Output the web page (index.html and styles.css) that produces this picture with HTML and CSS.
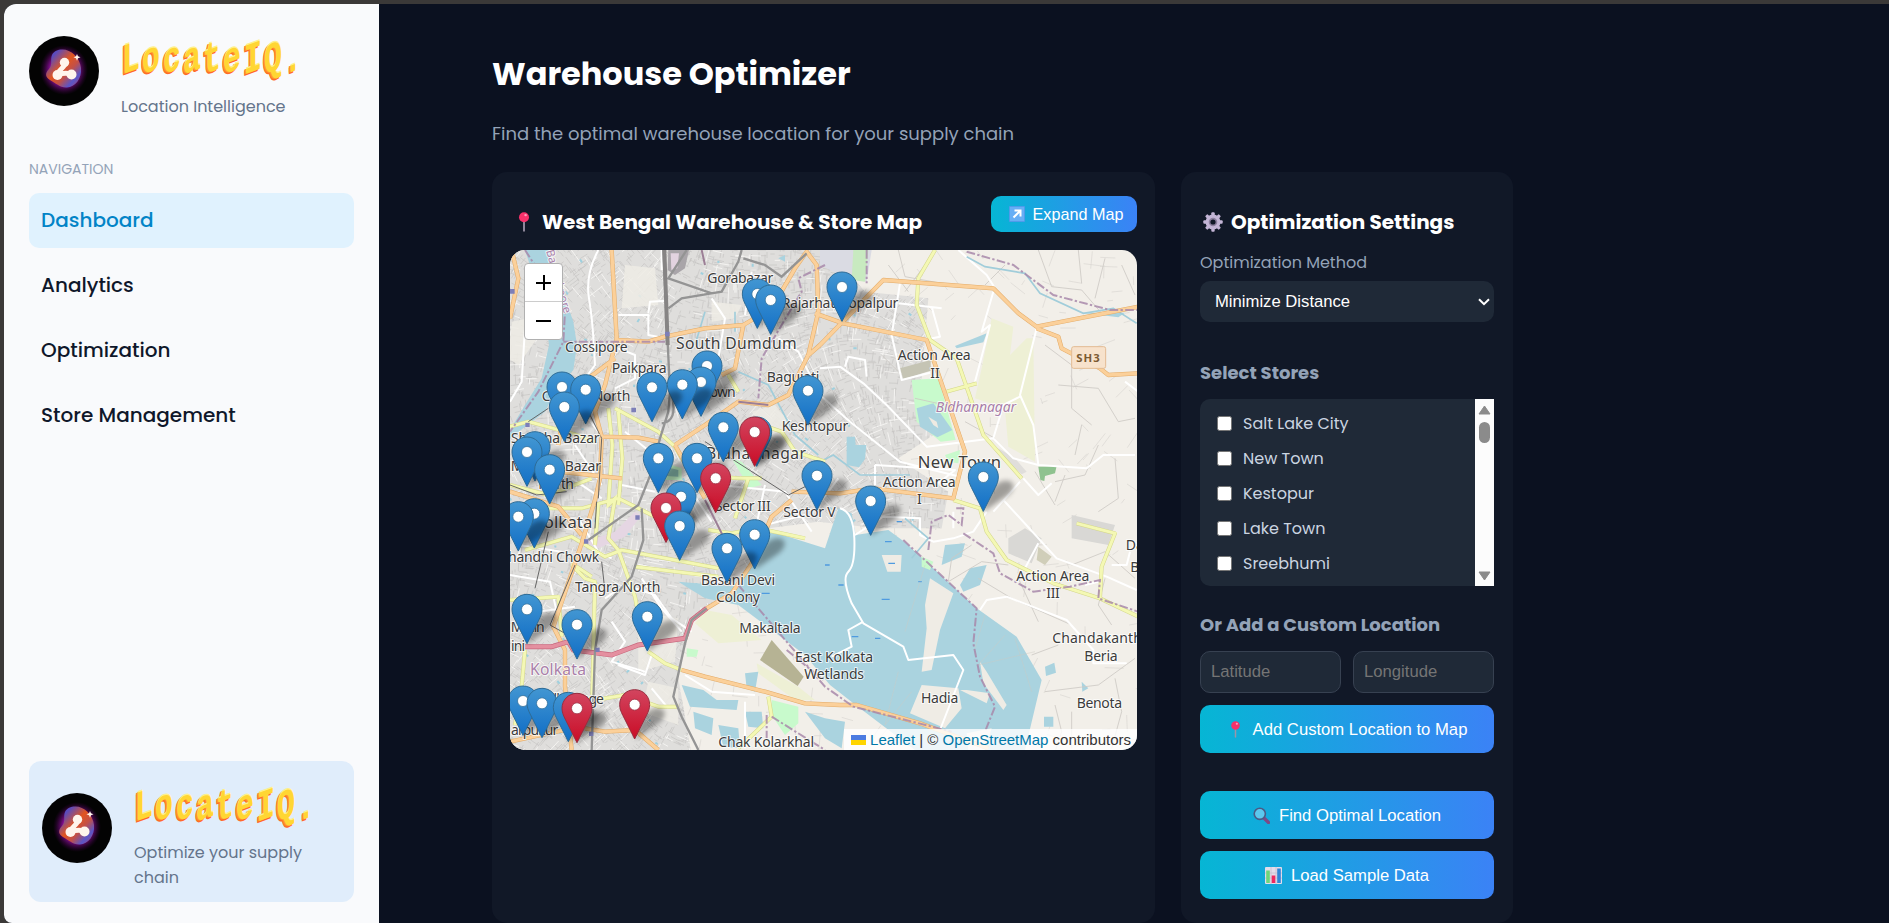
FILE: index.html
```html
<!DOCTYPE html>
<html lang="en">
<head>
<meta charset="utf-8">
<title>LocateIQ</title>
<link rel="stylesheet" href="styles.css">
</head>
<body>
<svg class="defs" aria-hidden="true">
  <defs>
    <linearGradient id="blob" x1="0" y1="0" x2="1" y2="1"><stop offset="0" stop-color="#4a4fd0"/><stop offset=".18" stop-color="#5a4bbd"/><stop offset=".45" stop-color="#e2551f"/><stop offset=".62" stop-color="#c25048"/><stop offset=".8" stop-color="#5a55c8"/><stop offset="1" stop-color="#b04a60"/></linearGradient>
    <radialGradient id="glow"><stop offset=".6" stop-color="#a010b0" stop-opacity=".8"/><stop offset="1" stop-color="#50005a" stop-opacity="0"/></radialGradient>
    <symbol id="logo" viewBox="0 0 70 70">
      <circle cx="35" cy="35" r="35" fill="#030303"/>
      <ellipse cx="35" cy="34" rx="24" ry="25" fill="url(#glow)"/>
      <path d="M33 13.500C41 13 51 21 52 32C53 43 46 51 38 51.500C31 52 27 47 21 44C16 41 16 37 20 33C24 28 21 24 23 19C25 15 29 13.500 33 13.500Z" fill="url(#blob)"/>
      <path d="M35.500 26.500C37 32 30 32 29 38M29 39Q36 36 43 38.500" fill="none" stroke="#fff5ec" stroke-width="5"/>
      <circle cx="35.500" cy="26.500" r="4.700" fill="#fff5ec"/><circle cx="28.500" cy="39" r="5" fill="#fff5ec"/><circle cx="42.500" cy="38.500" r="5" fill="#fff5ec"/>
      <path d="M48 18l1 2.300 2.500 1-2.500 1-1 2.400-1-2.400-2.500-1 2.500-1z" fill="#fff5ec"/>
    </symbol>
    <symbol id="pin" viewBox="0 0 20 20">
      <path d="M9.100 8h1.800v11.200l-.9.600-.9-.600z" fill="#9d94a8"/>
      <circle cx="10" cy="5.200" r="5" fill="#f8316a"/><ellipse cx="11.600" cy="3.200" rx="1.300" ry="1.100" fill="#ff9dbb"/>
    </symbol>
  </defs>
</svg>
<div class="window">
  <aside class="sidebar">
    <div class="brand">
      <svg class="logo"><use href="#logo"/></svg>
      <div>
        <div class="wordmark"><span>L</span><span>o</span><span>c</span><span>a</span><span>t</span><span>e</span><span>I</span><span>Q</span><span>.</span></div>
        <div class="tagline">Location Intelligence</div>
      </div>
    </div>
    <div class="nav-title">NAVIGATION</div>
    <nav class="nav">
      <a class="active">Dashboard</a>
      <a>Analytics</a>
      <a>Optimization</a>
      <a>Store Management</a>
    </nav>
    <div class="promo">
      <svg class="logo"><use href="#logo"/></svg>
      <div>
        <div class="wordmark"><span>L</span><span>o</span><span>c</span><span>a</span><span>t</span><span>e</span><span>I</span><span>Q</span><span>.</span></div>
        <div class="tagline">Optimize your supply<br>chain</div>
      </div>
    </div>
  </aside>
  <main class="main">
    <h1>Warehouse Optimizer</h1>
    <p class="lead">Find the optimal warehouse location for your supply chain</p>
    <div class="cards">
      <section class="card map-card">
        <div class="map-head">
          <h2><svg class="ico"><use href="#pin"/></svg>West Bengal Warehouse &amp; Store Map</h2>
          <button class="btn expand"><svg class="ico16" viewBox="0 0 16 16"><rect width="16" height="16" rx="1" fill="#4f9bea"/><rect x="1" y="1" width="14" height="14" fill="#67aef5"/><path d="M4.500 11.500L10.500 5.500M5.500 4.500h6v6" fill="none" stroke="#fff" stroke-width="2"/></svg>Expand Map</button>
        </div>
        <div class="map">
          <svg class="tiles" viewBox="15 15 1881 1500" id="map">
            <defs>
              <clipPath id="urban"><path d="M0 0H960L1080 140 1270 160 1250 400 1300 560 1180 640 1330 740 1310 850 1120 850 940 830 790 850 700 1020 560 1130 520 1300 560 1530H0z"/></clipPath>
              <linearGradient id="mb" x1="0" y1="0" x2="0" y2="1"><stop offset="0" stop-color="#4296d2"/><stop offset="1" stop-color="#126fc6"/></linearGradient>
              <linearGradient id="mr" x1="0" y1="0" x2="0" y2="1"><stop offset="0" stop-color="#d2455f"/><stop offset="1" stop-color="#ca0c26"/></linearGradient>
              <filter id="soft" x="-50%" y="-50%" width="200%" height="200%"><feGaussianBlur stdDeviation="2.200"/></filter>
              <g id="sh"><path d="M0 28C2 14 9 4 17 3 26 2 26 10 19 15Z" fill="#000" opacity=".34" filter="url(#soft)"/></g>
              <path id="mk" d="M0-12C-7-12-12-6.500-12 0-12 3-11 5.500-9.500 8.500L0 27.500 9.500 8.500C11 5.500 12 3 12 0 12-6.500 7-12 0-12Z"/>
              <g id="b"><use href="#sh"/><use href="#mk" fill="url(#mb)" stroke="#2e6c97" stroke-width=".8"/><circle r="4.400" fill="#fff" stroke="#2e6c97" stroke-width=".6"/></g>
              <g id="r"><use href="#sh"/><use href="#mk" fill="url(#mr)" stroke="#982e40" stroke-width=".8"/><circle r="4.400" fill="#fff" stroke="#982e40" stroke-width=".6"/></g>
            </defs>
            <rect width="1920" height="1530" fill="#f2efe9"/>
            <g id="rural" class="lane"></g>
            <g clip-path="url(#urban)"><rect width="1400" height="1530" fill="#dfdedc"/>
              <g id="streets"></g>
              <g fill="#efece5" opacity=".85"><path d="M360 60l90 10 10 110-110 10zM620 170l90 10-20 40-70 10zM20 230l50-10 40 40-70 100-30-20zM560 430l60 20-70 50zM740 500l70-20 50 60-60 30zM400 1100l120 20-10 130-110 30zM430 1310l90 20v110l-110-40z"/></g></g>
            <!-- land cover -->
            <g>
              <path class="water" d="M60 15H130L205 230 216 300 205 375 150 440 120 500 15 580V555L60 480 110 400 132 300 120 200Z"/>
              <path fill="#a9a5a9" d="M490 15h62l-12 55-30 20-22-15z"/><path fill="#e3d3e0" d="M497 25l25 0-5 45-18 5z"/>
              <path fill="#dadbe3" d="M945 15h155l-15 95-60-10-80-40z"/><path fill="#c8eac0" d="M1045 15h45l-10 95-40-5z"/>
              <g transform="translate(945)">
                <path class="field" d="M515 220l65 25-10 85 50-50 20 0 5 370-80-45-10-110-30-15-60-20 20-90z"/>
                <path class="park" d="M275 405l80-5 20 70 32 115-45 5-72-60z"/>
                <path class="water" d="M290 490l50-15 32 45 25 35-45 22-52-32zM80 575l25 0 2 25 32 0-4 42-18 25-37-7zM405 303l95-38-10 27-80 18zM785 203l130 0-20 14z"/>
                <path fill="#eeeae2" d="M325 515l25 15 5 20-15-10z"/>
                <path fill="#c5c4b4" d="M240 370l92-25v32l-82 25z"/>
                <path fill="#8fc28f" d="M655 665l55-2-5 22-30 8-2 15-12-3z"/>
                <path class="park" d="M375 630l45-15-5 40-30-5z"/><path fill="#e0dedb" d="M535 610l50 30 35 40-15 8-60-50z"/>
              </g>
              <path class="park" d="M680 640l30 10 60 70-40 10-20-40zM470 650l60 20v35l-55 0z"/><path fill="#8fc5b8" d="M480 665l40 10 0 20-38-2z"/>
              <path class="water" d="M820 40l20-10v20z"/>
              <path class="water" d="M790 855L850 875 960 910 1000 790 1040 805 1052 870 1150 855 1200 892 1415 1090 1535 1175 1610 1305 1560 1515H1230L1045 1375 975 1320 900 1230 700 1080 600 1060 520 1010 700 1025 740 960Z"/>
              <path fill="#efece5" d="M1275 1000l70 45-40 110-25 120-30 5 15-130-5-70zM1250 1320l110 10 10 60-50 60-105-45zM1130 930l60 0-3 50-40 0zM1385 1335l70 10-10 30-80-40zM1385 1465l75-15-20 65h-50zM1425 1250l20 30 60 100-10 15-60-80z"/>
              <path class="water" d="M1320 900l60-5-10 40-60 25zM1365 1020l30-50 50-10-20 60-50 20zM1620 1265l28-12 5 30-30 10zM1617 1415l28 0v30l-28 0zM1730 1310l20 20-18 10z"/>
              <path class="field" d="M600 1095l80 15 90 75-130 10-70-60zM755 1255l125 70 50 40-60 0-110-80z"/>
              <path fill="#b6b394" d="M800 1185l96 110-18 28-113-78z"/>
              <path class="park" d="M800 1365l80 20v50l-40 35-40-60zM545 1210l35 5-5 20-30 0zM1250 935l35 15-10 25-25-10z"/>
              <path class="water" d="M530 1320l65 15 40 30 65 0-5 30-140-10zM565 1400l60 20-5 50-50-20zM720 1285l40-5-10 60-25-10zM640 1440l60 10 5 60-50-5zM720 1400l50 0 5 50-45-5zM900 1400l60 20 60 10-10 80-50-30z"/>
              <path fill="#d9d8d5" d="M1700 810l130 30-20 60-110-20zM1510 880l50-30 50 30-30 75-70-30z"/><path fill="#d0ceb9" d="M1600 905l40 30-20 25-25-15z"/>
              <path fill="#e5d6e3" d="M240 890l90-30 60-60 20 10-50 65-80 35z"/>
              <path d="M960 960h14M1140 890h20M1150 955h20M1130 1063h24M1040 1175h20M1000 1020h16M1240 1010h10M1110 1180h16M770 1045h24M1175 830h16" stroke="#4f9be0" stroke-width="4"/>
            </g>
            <g class="lane">
              <path opacity=".5" d="M1260 960l-60 200M1440 1110l-30 100M1500 1170l-80 90 170-40M1530 1180l50 160M1180 1280l-40 160 80-100"/>
              <path d="M1400 900l-60 40-10 70 100-60 80 10M1420 1000l100 60 180 80M1660 1200l-80 30M1620 1340l160-20 110-80M1650 1380l20 80-20 60M1700 1400v110M1830 1300l20 100-30 110M1540 1000l60 130M1700 960l100-40 90 80M1800 1000l-20 80 40 60M1660 1020l20-40 70 30"/>
              <path d="M1150 60l60 80M1180 15l20 80 110 20M1260 60l-60 80M1500 60l-60 60M1600 15l40 110 90 10 60 70M1720 15l10 100M1800 40l-30 120M1850 60l40 90M1620 300l80 60 0 130 60 50M1660 420l120 10 60 100 50-10M1730 540l-20 90M1780 600l-40 90-90 20M1830 640l10 120-60 40M1590 680l60 100M1680 690l-30 80M1230 460l90 20M1380 530l90 50M1130 330l60 60"/>
            </g>
            <!-- local roads -->
            <g class="white">
              <path d="M280 15Q240 90 252 160T270 360L190 470M340 210h90v60l50 10M430 205l5-35 50-3M470 15v60M60 250l-10 160-35 60M340 310l50 20v70l-60 30M820 280l60 40 40 80M740 80l-20 130M620 160l40 60-20 120"/>
              <path d="M1185 115l-25 155 30 135 85-22M1180 175l130 15M1280 185l25 90-50 10M1465 140l-35 120 25-20-45 170M1360 15l85 75 25 40M1595 250l-50 200 40 90 15 120 145 10 50-40h95M1545 455l-50 25-30 100M945 370l60-5 70 50 70 65 120 125 200-25 60 60 75 20M945 450l90 80 150 120 180 45M1110 660l240 15-50 40M1110 660v60M1555 700l45 50 40-35M1545 710l-80 90M1020 365l10-30 50 10 5 50M1860 410l40 30"/>
              <path d="M1005 790Q1045 800 1048 880T1030 980 1040 1075L1075 1135 1195 1205 1210 1245 1345 1230 1375 1275 1305 1455M1075 1130l-45 25 10 50-60 30M1050 870l85-55 110 5 0 50 40 20 60-10 60-20 40-60M1495 765l160 175 150 55 90 40M1600 895l-40 75M1425 1095l20-30 60-10 180 70 80 90 0 40 100 0M1820 960l45 0 10-40M1345 850v-50M1780 1010l-40 10"/>
              <path d="M40 900l130 20M100 1100l110-15M300 1060l60-40 90 30 50 70 60 40M320 1130l40 60-40 60 100 30M440 1230l-20 60-80-30M530 1160l-60-70-60-90M60 800l-20 140M220 820l60 100 40 20M15 990l120 20 20 90M440 1330l50 60M720 1370l0 140M540 1290l80 50 130 10M400 960l220 40"/>
              <path d="M200 700l90 60M210 600l80 120M220 480l60 80M360 560l100 80M350 720l100 20M640 720l200 20 80 120M780 720l-30 140M560 740l60 90M700 860l200-50M1000 700l-60 80"/>
            </g>
            <g fill="none" stroke="#a1cdda" stroke-width="5">
              <path d="M1385 35l55 30 120 20 45 60 130 60 90-15 70 45M945 650l40-20 80 60 150 0M700 380l90 40 80 150 70 60M600 200l-30 100M690 200l0 60M1200 820l70 60-50 60"/>
            </g>
            <!-- secondary roads -->
            <g class="yellow-c"><path id="ye" d="M15 545L70 530 200 565 270 590M310 490L322 600 310 780 330 760 310 880 340 915 390 1055 400 1110M340 500L352 640 340 780M330 490L460 560 510 605 560 690 700 700 770 700M670 390L700 440M770 540L830 560 870 620 960 650M1290 15L1240 100 1235 180 1275 285 1355 340 1435 570 1550 700M1325 440L1415 415M1345 765L1425 790 1445 860 1505 945 1645 1015 1785 1060 1900 1115M1715 835L1830 865 1790 965 1785 1060M60 915L200 875 300 935 350 915 640 970M200 955L260 995M390 965L640 995M430 1220L480 1255 530 1275M270 1365L360 1350 460 1385 520 1385M60 1215L50 1325 30 1440M790 1355L800 1415 700 1510M610 855L680 865 760 850 900 880M15 1065L160 1055 170 1175M15 720L130 750 260 700M15 840L100 790 230 790 340 760 480 830 530 930M280 780L270 900M200 960L240 1000 270 1010 262 1350M690 820L730 700"/></g><use href="#ye" class="yellow"/>
            <!-- primary roads -->
            <g class="orange-c"><path id="or" d="M320 15L335 280 300 420 270 500 290 575 400 578 460 590M335 285L430 290 480 275 600 250 715 240 800 190 870 70 905 20 935 60 940 200 910 330 850 450 790 480 700 470 600 540 510 600M945 300L905 335M715 240L690 370 650 390M330 340L250 400 180 470 160 600M20 15L40 100 15 220M945 300L1135 105 1465 130 1540 205 1595 245 1900 185M930 205L1015 235 1265 285 1380 620 1345 760 1105 730 1005 745 860 740M1595 250L1660 275 1670 310 1785 370 1810 390 1900 385M605 1090L680 1045 740 955 800 815 860 765M290 575L285 700 270 765 230 895 145 1145 180 1215 180 1325 200 1515M530 1275L600 1295 780 1340 900 1375 1005 1380 1055 1380 1245 1435 1450 1510M240 1450L300 1460 390 1455 460 1515M15 1490L200 1450M15 740L160 785 230 870M160 680L350 700M510 600L600 760"/></g><use href="#or" class="orange"/>
            <path d="M60 1205L140 1205 190 1190 205 1215 320 1230 400 1200 540 1180 560 1125 605 1090" fill="none" stroke="#c8667c" stroke-width="15"/>
            <path d="M60 1205L140 1205 190 1190 205 1215 320 1230 400 1200 540 1180 560 1125 605 1090" fill="none" stroke="#e490a0" stroke-width="11"/>
            <!-- railways -->
            <g fill="none" stroke="#949494" stroke-width="7">
              <path d="M475 15L487 270 495 440 490 500 465 580 440 680 400 780 300 850 250 885M545 15L490 100 620 145 650 140 700 50 710 15M490 190L530 160 650 140M715 40L780 60 830 95 905 25M605 1090L560 1125 540 1195 505 1355 530 1415 580 1515M410 790L415 885 380 995 290 1095 270 1215 260 1515M500 450q20 80-30 85"/>
              <path stroke-width="12" stroke="#868484" d="M478 15L488 300"/>
              <path stroke-width="3" stroke="#666" d="M130 860L90 1030M275 770L270 850M15 720l80 30 90-10M290 950l10 90M600 590l250 160 60-30M70 530l60-40M210 960L135 1140l90 50M240 480l50 100-10 180"/>
            </g>
            <g class="bound">
              <path d="M60 15L180 200 175 290 100 440 15 560M175 290L480 290M1385 20L1525 60 1645 150 1815 195 1900 195M1195 885L1415 1090 1405 1195 1425 1295 1470 1385 1440 1460M1270 915L1280 830 1330 810 1370 840 1375 790 1350 790M1375 865L1465 925 1485 985 1585 1040 1695 1025 1785 1005 1780 1060 1900 1100M700 1020L960 1325 1045 1385 1340 1460M845 1215l110 90M785 1410l0 70M800 1415l160 100M960 60L880 100 890 140 770 340 760 460M1085 15l0 100"/>
            </g>
            <path d="M590 15L600 60M700 470L790 480M600 765l60 120 30 40" fill="none" stroke="#9c7f96" stroke-width="6"/>
            <g fill="#7d7fb8"><path d="M15 132h14v14H15zM480 260h14v14h-14zM379 488h14v14h-14zM61 533h13v13H61zM391 811h13v13h-13zM237 883h13v13h-13zM271 1208h13v13h-13zM252 1460h13v13h-13z"/></g>
            <g class="lbl" id="labels">
              <text x="607" y="115" textLength="198">Gorabazar</text>
              <text x="830" y="190" textLength="350">Rajarhat Gopalpur</text>
              <text x="180" y="320" textLength="188">Cossipore</text>
              <text x="513" y="313" textLength="362" class="l2">South Dumdum</text>
              <text x="320" y="383" textLength="165">Paikpara</text>
              <text x="785" y="411" textLength="158">Baguiati</text>
              <text x="110" y="468" textLength="266">Chitpur North</text>
              <text x="510" y="455" textLength="182">Lake Town</text>
              <text x="830" y="557" textLength="200">Keshtopur</text>
              <text x="18" y="595" textLength="266">Shobha Bazar</text>
              <text x="603" y="642" textLength="300" class="l2">Bidhannagar</text>
              <text x="17" y="677" textLength="271">Machua Bazar</text>
              <text x="100" y="731" textLength="107">North</text>
              <text x="630" y="798" textLength="167">Sector III</text>
              <text x="835" y="817" textLength="157">Sector V</text>
              <text x="85" y="850" textLength="177" class="l3">Kolkata</text>
              <text x="-17" y="952" textLength="300">Chandni Chowk</text>
              <text x="210" y="1040" textLength="256">Tangra North</text>
              <text x="588" y="1019" textLength="222">Basani Devi</text>
              <text x="633" y="1072" textLength="132">Colony</text>
              <text x="703" y="1165" textLength="184">Makaltala</text>
              <text x="870" y="1251" textLength="234">East Kolkata</text>
              <text x="898" y="1303" textLength="179">Wetlands</text>
              <text x="1178" y="345" textLength="219">Action Area</text><text x="1276" y="399">II</text>
              <text x="1133" y="727" textLength="219">Action Area</text><text x="1236" y="778">I</text>
              <text x="1238" y="668" textLength="250" class="l3">New Town</text>
              <text x="1534" y="1007" textLength="219">Action Area</text><text x="1624" y="1060" textLength="40">III</text>
              <text x="1642" y="1195" textLength="280">Chandakanthi</text>
              <text x="1738" y="1248" textLength="100">Beria</text>
              <text x="1248" y="1375" textLength="112">Hadia</text>
              <text x="1715" y="1390" textLength="136">Benota</text>
              <text x="1862" y="916">Da</text><text x="1876" y="981">B</text>
              <text x="17" y="1162" textLength="102">Mullin</text><text x="18" y="1217" textLength="42">ini</text>
              <text x="100" y="1378" textLength="197">Ballygunge</text>
              <text x="18" y="1471" textLength="142">arpukur</text>
              <text x="640" y="1507" textLength="287">Chak Kolarkhal</text>
              <g fill="#a97fa9"><text x="75" y="1290" textLength="168" class="l2">Kolkata</text>
              <text x="1292" y="502" textLength="241" font-style="italic">Bidhannagar</text>
              <text transform="translate(123 18) rotate(74)" font-size="34">Barrackpore</text></g>
            </g>
            <rect x="1700" y="305" width="102" height="65" rx="6" fill="#f7e2cc" stroke="#e3bb92" stroke-width="3"/>
            <text x="1714" y="351" textLength="70" class="shield">SH3</text>
            <g id="pins"></g>
          </svg>
          <div class="zoomctl"><span><i></i><i class="v"></i></span><span><i></i></span></div>
          <div class="attrib"><svg width="15" height="10" viewBox="0 0 15 10"><path fill="#4c7be1" d="M0 0h15v5H0z"/><path fill="#ffd500" d="M0 5h15v5H0z"/></svg> <a>Leaflet</a> | © <a>OpenStreetMap</a> contributors</div>
        </div>
      </section>
      <section class="card settings">
        <h2><svg class="ico" viewBox="0 0 20 20"><g fill="#c4b5d6"><circle cx="10" cy="10" r="7.500"/><g id="tt"><rect x="8.300" y=".3" width="3.400" height="19.400" rx="1"/><rect x=".3" y="8.300" width="19.400" height="3.400" rx="1"/></g><use href="#tt" transform="rotate(45 10 10)"/></g><circle cx="10" cy="10" r="4.300" fill="#8d7f9f"/><circle cx="10" cy="10" r="2.600" fill="#111827"/></svg>Optimization Settings</h2>
        <label class="field-label">Optimization Method</label>
        <div class="select"><span>Minimize Distance</span><svg width="12" height="8" viewBox="0 0 12 8"><path d="M1 1.200l5 5 5-5" fill="none" stroke="#fff" stroke-width="2"/></svg></div>
        <h3>Select Stores</h3>
        <div class="stores">
          <ul>
            <li><i></i>Salt Lake City</li><li><i></i>New Town</li><li><i></i>Kestopur</li><li><i></i>Lake Town</li><li><i></i>Sreebhumi</li>
          </ul>
          <div class="scroll"><svg width="13" height="10" viewBox="0 0 13 10"><path d="M6.500 1L12 9H1z" fill="#8b8b8b" stroke="#8b8b8b" stroke-linejoin="round"/></svg><i></i><svg class="dn" width="13" height="10" viewBox="0 0 13 10"><path d="M6.500 9L12 1H1z" fill="#8b8b8b" stroke="#8b8b8b" stroke-linejoin="round"/></svg></div>
        </div>
        <h3 class="h-custom">Or Add a Custom Location</h3>
        <div class="coords"><div>Latitude</div><div>Longitude</div></div>
        <button class="btn"><svg class="ico16"><use href="#pin"/></svg>Add Custom Location to Map</button>
        <button class="btn find"><svg class="ico16" viewBox="0 0 17 17"><path d="M11 11l4.500 4.500" stroke="#7d4a86" stroke-width="3.400" stroke-linecap="round"/><circle cx="6.800" cy="6.800" r="5.600" fill="#5cc8ee" stroke="#4b5a86" stroke-width="1.600"/></svg>Find Optimal Location</button>
        <button class="btn load"><svg class="ico16" viewBox="0 0 17 17"><rect width="17" height="17" rx="1" fill="#e4dcea"/><path d="M0 6h17M0 11h17M6 0v17M11 0v17" stroke="#c6bcd0" stroke-width=".8"/><path d="M1.200 3.500h3.600V16H1.200z" fill="#6fd67a"/><path d="M6.700 8.500h3.600V16H6.700z" fill="#f0285f"/><path d="M12.200 1.500h3.600V16h-3.600z" fill="#2f86d8"/></svg>Load Sample Data</button>
      </section>
    </div>
  </main>
</div>
<script src="map.js"></script>
</body>
</html>
```
FILE: styles.css
```css
* { box-sizing: border-box; }
body { margin: 0; width: 1889px; height: 923px; overflow: hidden; background: #3b3938; font-family: Poppins, Inter, "Open Sans", sans-serif; }
h1, h2, h3, p, ul { margin: 0; padding: 0; }
.defs { position: absolute; width: 0; height: 0; }
.window { display: flex; margin: 4px 0 0 4px; height: 919px; border-radius: 12px 0 0 8px; overflow: hidden; background: #0b1120; }

.sidebar { width: 375px; flex: none; background: #f9fafc; padding: 32px 25px 21px; display: flex; flex-direction: column; }
.brand, .promo { display: flex; gap: 22px; }
.brand { height: 101px; }
.logo { width: 70px; height: 70px; flex: none; }
.wordmark { display: flex; height: 58px; padding: 6px 0 0 1px; font: bold 30px/40px "Liberation Mono", monospace; color: #ffd633; }
.wordmark span { width: 20.300px; transform: skewY(-20deg) scale(1, 1.420); text-shadow: 0 -1px #fff08c, -1px 0 #ffa033, -2px 0 #ff8427, -2px 1px #ff6a2a; }
.tagline { font-size: 16px; line-height: 25px; color: #64748b; }
.promo .wordmark { height: 57px; }
.nav-title { height: 56px; padding-top: 20px; font-size: 14px; line-height: 24px; color: #94a3b8; }
.nav { display: flex; flex-direction: column; gap: 10px; flex: 1; }
.nav a { height: 55px; border-radius: 10px; padding-left: 12px; font-size: 20px; line-height: 55px; font-weight: 500; color: #0f172a; }
.nav .active { background: #e0f2fe; color: #0284c7; }
.promo { height: 141px; border-radius: 12px; background: #e0edfb; padding: 22px 13px; }
.promo .logo { margin-top: 10px; }

.main { flex: 1; padding: 44px 0 0 113px; }
h1 { font-size: 32px; line-height: 52px; color: #fff; font-weight: 700; white-space: nowrap; width: max-content; }
.lead { margin-top: 19px; font-size: 18px; line-height: 30px; color: #94a3b8; width: max-content; }
.cards { display: flex; gap: 26px; margin-top: 23px; }
.card { background: #111827; border-radius: 15px; height: 751px; }
.map-card { width: 663px; padding: 24px 18px; }
.map-head { display: flex; justify-content: space-between; height: 54px; }
h2 { display: flex; align-items: center; height: 30px; font-size: 20px; font-weight: 700; color: #fff; white-space: nowrap; }
.map-head h2 { margin: 11px 0 0 4px; }
.ico { width: 20px; height: 20px; margin-right: 8px; }
.btn { display: flex; align-items: center; justify-content: center; width: 100%; height: 48px; padding: 2px 0 0; border: 0; border-radius: 10px; background: linear-gradient(90deg, #06b6d4, #3b82f6); color: #fff; font: 16.670px "Liberation Sans", Arial, sans-serif; }
.btn .ico16 { width: 17px; height: 17px; margin: -2px 9px 0 0; }
.btn.expand { width: 146px; height: 36px; padding: 0 0 0 4px; font-size: 16.200px; }
.expand .ico16 { width: 16px; height: 16px; margin: 0 8px 0 0; }

.map { position: relative; width: 627px; height: 500px; border-radius: 15px; overflow: hidden; }
.tiles { display: block; width: 627px; height: 500px; }
.water { fill: #aad3df; }
.park { fill: #c8facc; }
.field { fill: #eef0d5; }
.lane { fill: none; stroke: #ccc9c4; stroke-width: 2.500; }
.white { fill: none; stroke: #fff; stroke-width: 6; stroke-linejoin: round; }
.yellow-c { fill: none; stroke: #d3d68a; stroke-width: 12; stroke-linejoin: round; }
.yellow { fill: none; stroke: #f4f8b4; stroke-width: 9; }
.orange-c { fill: none; stroke: #e3ab68; stroke-width: 13; stroke-linejoin: round; }
.orange { fill: none; stroke: #fbd09a; stroke-width: 10; }
.bound { fill: none; stroke: #a888aa; stroke-width: 6; stroke-dasharray: 26 7 7 7; opacity: .85; }
.lbl { font: 42px "Noto Sans", sans-serif; fill: #3c3c3c; stroke: #fff; stroke-opacity: .75; stroke-width: 6; paint-order: stroke; stroke-linejoin: round; }
.l2 { font-size: 47px; }
.l3 { font-size: 50px; }
.shield { font: bold 34px "Noto Sans", sans-serif; fill: #7b5a32; }
.zoomctl { position: absolute; left: 14px; top: 13px; width: 39px; border: 1px solid #b0b0b0; border-radius: 4px; background: #fff; display: grid; }
.zoomctl span { display: grid; place-items: center; height: 37px; }
.zoomctl span + span { border-top: 1px solid #ccc; height: 38px; }
.zoomctl i { grid-area: 1 / 1; width: 15px; height: 2px; background: #000; }
.zoomctl .v { width: 2px; height: 15px; }
.attrib { position: absolute; right: 0; bottom: 0; height: 21px; padding: 0 6px 0 7px; background: rgba(255,255,255,.8); font: 15px/21px "Liberation Sans", Arial, sans-serif; color: #333; white-space: nowrap; }
.attrib a { color: #0078a8; }

.settings { width: 332px; padding: 35px 19px 0; }
.settings h2 { margin-left: 3px; }
.field-label { display: block; margin-top: 14px; font-size: 16px; line-height: 24px; color: #94a3b8; }
.select { display: flex; justify-content: space-between; align-items: center; margin-top: 6px; height: 41px; padding: 0 4px 0 15px; border-radius: 10px; background: #1f2937; color: #fff; font: 16.670px "Liberation Sans", Arial, sans-serif; }
h3 { font-size: 18px; line-height: 28px; margin-top: 37px; font-weight: 700; color: #94a3b8; white-space: nowrap; width: max-content; }
.stores { display: flex; height: 187px; margin-top: 12px; border-radius: 10px 0 0 10px; overflow: hidden; background: #1f2937; }
.stores ul { flex: 1; list-style: none; padding: 7px 0 0 17px; }
.stores li { display: flex; align-items: center; height: 35px; font-size: 16px; color: #cbd5e1; }
.stores li i { width: 15px; height: 15px; margin-right: 11px; background: #fff; border: 1px solid #767676; border-radius: 2.500px; }
.scroll { width: 19px; background: #fcfcfc; display: flex; flex-direction: column; align-items: center; padding: 6px 0 5px; }
.scroll i { width: 11px; height: 21px; margin-top: 7px; border-radius: 6px; background: #8b8b8b; }
.scroll .dn { margin-top: auto; }
.h-custom { margin-top: 25px; }
.coords { display: flex; gap: 12px; margin: 12px 0; }
.coords div { flex: 1; height: 42px; padding-left: 10px; border: 1px solid #374151; border-radius: 10px; background: #1f2937; color: #757575; font: 16.670px/39px "Liberation Sans", Arial, sans-serif; }
.find { margin-top: 38px; }
.load { margin-top: 12px; }
```
FILE: map.js
```js
// Seeded generator so the street texture is the same on every load.
let seed = 7;
const rnd = () => (seed = (seed * 16807) % 2147483647) / 2147483647;

function streets(n, w, h, min, max) {
  let d = '';
  for (let i = 0; i < n; i++) {
    const x = rnd() * w, y = rnd() * h;
    const a = Math.sin(x / 170) * .5 + Math.cos(y / 210) * .5 + (rnd() < .5 ? Math.PI / 2 : 0);
    const l = min + rnd() * (max - min);
    d += `M${x.toFixed(0)} ${y.toFixed(0)}l${(Math.cos(a) * l).toFixed(0)} ${(Math.sin(a) * l).toFixed(0)}`;
  }
  return d;
}
document.getElementById('streets').innerHTML =
  `<path d="${streets(7000, 1400, 1530, 8, 30)}" fill="none" stroke="#c6c4c2" stroke-width="2"/>` +
  `<path d="${streets(1100, 1400, 1530, 14, 50)}" fill="none" stroke="#f4f3f1" stroke-width="3"/>` +
  `<path d="${streets(120, 1400, 1530, 6, 12)}" fill="none" stroke="#9fd0de" stroke-width="6"/>`;
document.getElementById('rural').innerHTML =
  `<path d="${streets(500, 1900, 1530, 15, 60)}" stroke="#dad7d1" stroke-width="2"/>`;

// [kind, x, y] of the centre of each marker head
const pins = [
  ['b',1011,126],['b',757,147],['b',797,165],['b',606,363],['b',588,411],['b',532,419],['b',171,426],
  ['b',441,427],['b',242,434],['b',909,437],['b',178,486],['b',655,547],['b',755,561],['r',749,561],
  ['b',90,605],['b',66,621],['b',460,640],['b',576,640],['b',134,674],['b',936,692],['b',1435,696],
  ['r',632,700],['b',528,755],['b',1097,768],['r',483,789],['b',88,806],['b',40,815],['b',524,843],
  ['b',749,869],['b',666,910],['b',66,1093],['b',427,1115],['b',216,1139],['b',54,1368],['b',111,1375],
  ['r',389,1379],['b',190,1387],['r',216,1390]
];
document.getElementById('pins').innerHTML = pins.map(([k, x, y]) =>
  `<use href="#${k}" transform="translate(${x} ${y}) scale(3.75)"/>`).join('');
```
